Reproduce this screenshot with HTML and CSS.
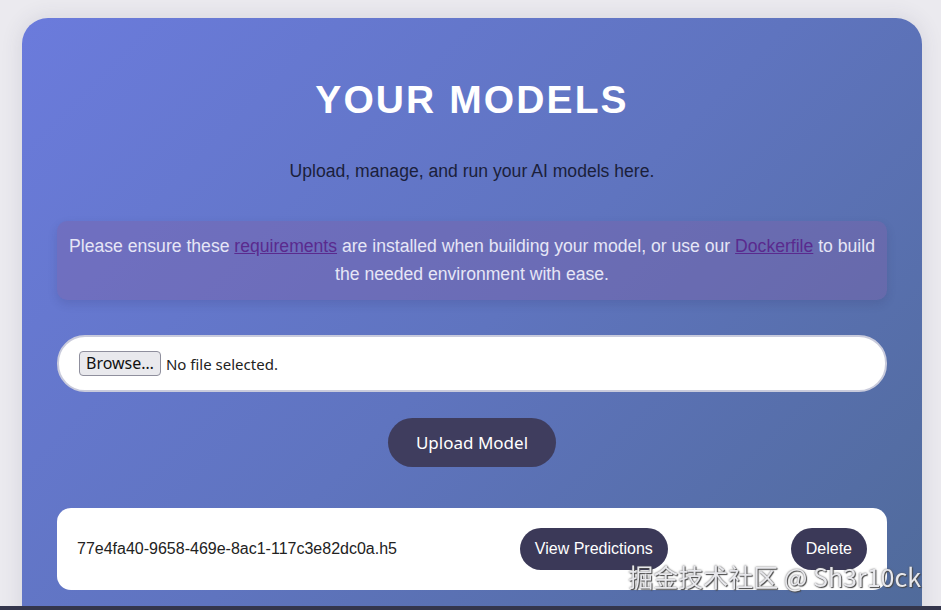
FILE: index.html
```html
<!DOCTYPE html>
<html lang="en">
<head>
  <meta charset="UTF-8" />
  <title>Your Models</title>
  <link rel="stylesheet" href="styles.css">
</head>
<body>
  <main class="panel">
    <h1>YOUR MODELS</h1>
    <p class="subtitle">Upload, manage, and run your AI models here.</p>

    <div class="notice">
      Please ensure these <a href="#">requirements</a> are installed when building your model, or use our <a href="#">Dockerfile</a> to build the needed environment with ease.
    </div>

    <form class="upload-form">
      <div class="file-box">
        <label class="browse-btn" for="modelFile">Browse…</label>
        <span class="file-name">No file selected.</span>
        <input type="file" id="modelFile" class="file-hidden">
      </div>
      <button type="submit" class="upload-btn">Upload Model</button>
    </form>

    <div class="model-list">
      <div class="model-item">
        <span class="model-name">77e4fa40-9658-469e-8ac1-117c3e82dc0a.h5</span>
        <button class="dark-btn">View Predictions</button>
        <button class="dark-btn">Delete</button>
      </div>
    </div>
  </main>

  <div class="watermark">掘金技术社区 @ Sh3r10ck</div>
  <div class="taskbar"></div>
</body>
</html>
```

FILE: styles.css
```css
body { margin: 0; background: #ebeaef; font-family: 'Liberation Sans', Arial, sans-serif; overflow: hidden; height: 610px; }

.panel {
  width: 900px;
  box-sizing: border-box;
  margin: 18px 0 0 22px;
  padding: 24px 35px 40px;
  min-height: 640px;
  border-radius: 26px;
  background: linear-gradient(135deg, #6b7bdc 0%, #5f74bf 50%, #4f6a98 100%);
  box-shadow: 0 0 22px rgba(60, 60, 90, 0.12);
}

h1 {
  margin: 35px 0 0;
  text-align: center;
  color: #fff;
  font-size: 39px;
  line-height: 46px;
  letter-spacing: 2.1px;
}

.subtitle {
  margin: 38px 0 0;
  text-align: center;
  color: #1b1f3b;
  font-size: 17.6px;
}

.notice {
  margin-top: 39px;
  padding: 11px 12px 12px;
  border-radius: 10px;
  background: rgba(122, 100, 170, 0.45);
  box-shadow: 0 4px 10px rgba(40, 40, 90, 0.15);
  color: #e6e6f6;
  font-size: 17.6px;
  line-height: 28px;
  text-align: center;
}
.notice a { color: #5a2a8e; }

.upload-form { margin-top: 35px; display: flex; flex-direction: column; align-items: center; }

.file-box {
  align-self: stretch;
  display: flex;
  align-items: center;
  gap: 5px;
  padding: 14px 20px;
  background: #fff;
  border: 2px solid #c9cbdc;
  border-radius: 28px;
  font-family: 'Noto Sans', sans-serif;
  font-size: 15px;
  color: #222;
}
.browse-btn {
  padding: 0 6px;
  font-size: 16px;
  line-height: 23px;
  background: #e9e9ed;
  border: 1px solid #8f8f9d;
  border-radius: 4px;
  color: #111;
}
.file-hidden { display: none; }

.upload-btn {
  margin-top: 26px;
  height: 49px;
  padding: 0 28px;
  border: none;
  border-radius: 25px;
  background: #3f3d5e;
  color: #fff;
  font-family: 'Noto Sans', sans-serif;
  font-size: 17px;
  cursor: pointer;
}

.model-list { margin-top: 41px; }
.model-item {
  display: flex;
  align-items: center;
  justify-content: space-between;
  padding: 20px;
  background: #fff;
  border-radius: 14px;
}
.model-name { color: #222; font-size: 16px; }
.dark-btn {
  height: 42px;
  padding: 0 15px;
  border: none;
  border-radius: 21px;
  background: #3b3958;
  color: #fff;
  font-family: 'Liberation Sans', Arial, sans-serif;
  font-size: 16px;
  cursor: pointer;
}

.watermark {
  position: fixed;
  right: 20px;
  bottom: 16px;
  color: #e8e8ec;
  font-family: 'Noto Sans CJK SC', 'Noto Sans', sans-serif;
  font-size: 25px;
  text-shadow: 0 0 2px #555, 1px 1px 1px #444;
}
.taskbar { position: fixed; left: 0; right: 0; bottom: 0; height: 4px; background: #34364c; }
```
